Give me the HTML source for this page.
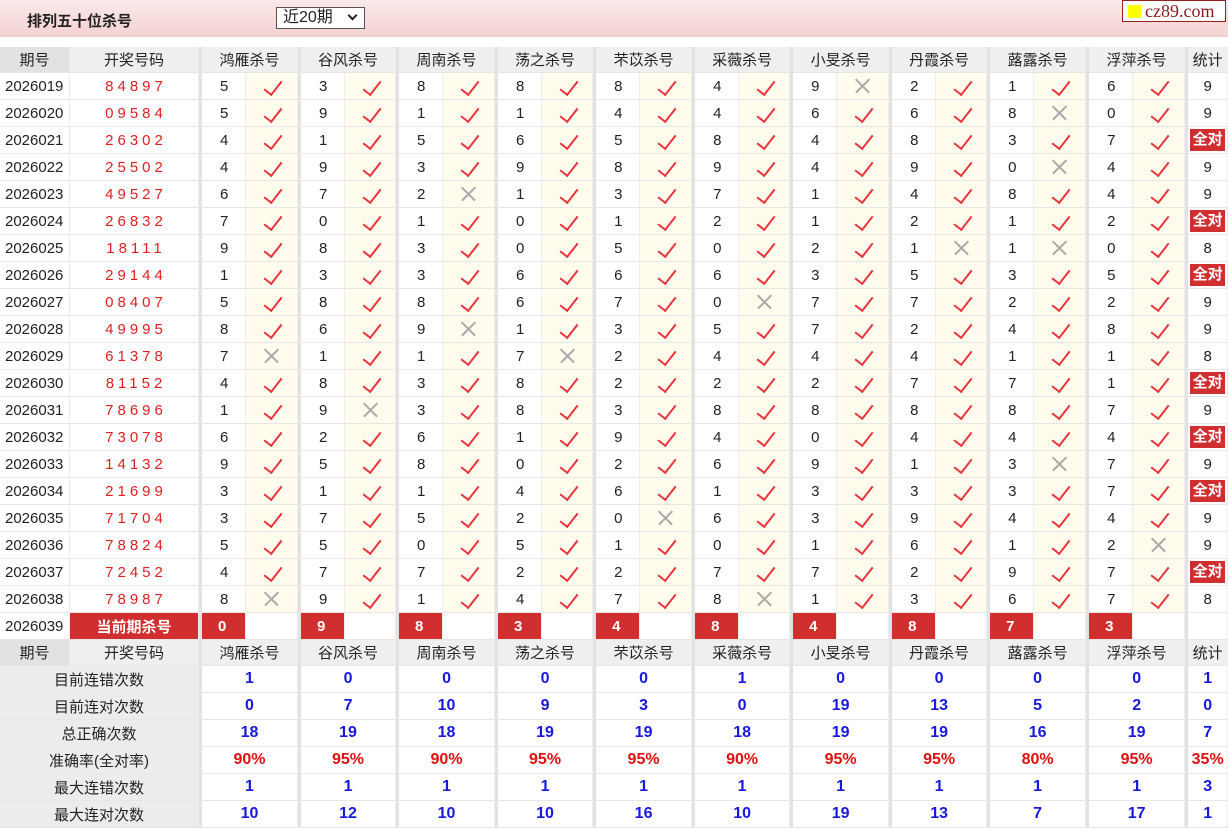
<!DOCTYPE html>
<html><head><meta charset="utf-8"><style>
*{box-sizing:border-box;margin:0;padding:0}
body{width:1228px;height:830px;overflow:hidden;background:#fff;font-family:"Liberation Sans","Noto Sans CJK SC",sans-serif;color:#222;position:relative}
.top{position:absolute;left:0;top:0;width:1228px;height:37px;background:linear-gradient(#fbe9e9,#f4d2d2);border-bottom:1px solid #ead0d0}
.title{position:absolute;left:27px;top:10px;font-size:15px;font-weight:bold;color:#222}
.sel{position:absolute;left:276px;top:7px;width:89px;height:22px;border:1px solid #555;background:#fff;font-size:16px;padding-left:6px;line-height:20px}
.sel i{position:absolute;right:8px;top:4px;width:7px;height:7px;border-right:2px solid #222;border-bottom:2px solid #222;transform:rotate(45deg)}
.logo{position:absolute;left:1122px;top:0;width:104px;height:22px;border:1px solid #9b1c1c;background:#fff;font-family:"Liberation Serif",serif;font-size:18px;color:#8b1a1a;line-height:20px;padding-left:22px}
.logo b{position:absolute;left:5px;top:4px;width:13px;height:13px;background:#ff0}
table{position:absolute;left:0;top:47px;border-collapse:separate;border-spacing:0;table-layout:fixed;width:1228px}
td{height:27px;border-bottom:1px solid #e6e6e6;border-right:1px solid #eee;text-align:center;font-size:15px;padding:0;white-space:nowrap;position:relative}
tr.h td{height:26px;background:#efefef;color:#222}
td.p{text-align:left;padding-left:5px;background:#fff}
tr.h td.p{background:#e2e2e2;text-align:center;padding:0}
td.d{color:#e02020;letter-spacing:4px;font-size:15px;padding-left:4px}
td.g{border-left:3px solid #e2e2e2;text-align:left;padding-left:18px}
tr.h td.g{text-align:center;padding-left:0}
td.y,td.x{background:#fffcee}
td.y::after{content:"";position:absolute;left:22px;top:4px;width:8px;height:16px;border-right:2px solid #e8333b;border-bottom:2px solid #e8333b;transform:rotate(38deg)}
td.x::before,td.x::after{content:"";position:absolute;left:16px;top:12px;width:19px;height:1.5px;background:#aaa;transform:rotate(45deg)}
td.x::after{transform:rotate(-45deg)}
td.s{border-left:3px solid #e2e2e2}
td.q{padding:2px}
td.q span{display:block;background:#d12f2f;color:#fff;font-weight:bold;height:22px;line-height:22px;font-size:15px}
tr.k td.r{background:#d12f2f;color:#fff;font-weight:bold;text-align:left;padding-left:16px}
tr.k td.c{background:#d12f2f;color:#fff;font-weight:bold;letter-spacing:0}
tr.k td.w{background:#fff}
td.L{background:#ececec}
td.v{color:#1818e0;font-weight:bold;font-size:16px;border-left:3px solid #e2e2e2}
tr.a td.v{color:#e01010}
</style></head><body>
<div class="top"><div class="title">排列五十位杀号</div><div class="sel">近20期<i></i></div><div class="logo"><b></b>cz89.com</div></div>
<table>
<colgroup><col style="width:70px"><col style="width:129px"><col style="width:47px"><col style="width:52px"><col style="width:47px"><col style="width:51px"><col style="width:47px"><col style="width:52px"><col style="width:47px"><col style="width:51px"><col style="width:47px"><col style="width:52px"><col style="width:47px"><col style="width:51px"><col style="width:47px"><col style="width:52px"><col style="width:47px"><col style="width:51px"><col style="width:47px"><col style="width:52px"><col style="width:47px"><col style="width:52px"><col style="width:43px"></colgroup>
<tr class="h"><td class="p">期号</td><td>开奖号码</td><td class="g" colspan="2">鸿雁杀号</td><td class="g" colspan="2">谷风杀号</td><td class="g" colspan="2">周南杀号</td><td class="g" colspan="2">荡之杀号</td><td class="g" colspan="2">芣苡杀号</td><td class="g" colspan="2">采薇杀号</td><td class="g" colspan="2">小旻杀号</td><td class="g" colspan="2">丹霞杀号</td><td class="g" colspan="2">蕗露杀号</td><td class="g" colspan="2">浮萍杀号</td><td class="s">统计</td></tr>
<tr><td class="p">2026019</td><td class="d">84897</td><td class="g">5</td><td class="y"></td><td class="g">3</td><td class="y"></td><td class="g">8</td><td class="y"></td><td class="g">8</td><td class="y"></td><td class="g">8</td><td class="y"></td><td class="g">4</td><td class="y"></td><td class="g">9</td><td class="x"></td><td class="g">2</td><td class="y"></td><td class="g">1</td><td class="y"></td><td class="g">6</td><td class="y"></td><td class="s">9</td></tr>
<tr><td class="p">2026020</td><td class="d">09584</td><td class="g">5</td><td class="y"></td><td class="g">9</td><td class="y"></td><td class="g">1</td><td class="y"></td><td class="g">1</td><td class="y"></td><td class="g">4</td><td class="y"></td><td class="g">4</td><td class="y"></td><td class="g">6</td><td class="y"></td><td class="g">6</td><td class="y"></td><td class="g">8</td><td class="x"></td><td class="g">0</td><td class="y"></td><td class="s">9</td></tr>
<tr><td class="p">2026021</td><td class="d">26302</td><td class="g">4</td><td class="y"></td><td class="g">1</td><td class="y"></td><td class="g">5</td><td class="y"></td><td class="g">6</td><td class="y"></td><td class="g">5</td><td class="y"></td><td class="g">8</td><td class="y"></td><td class="g">4</td><td class="y"></td><td class="g">8</td><td class="y"></td><td class="g">3</td><td class="y"></td><td class="g">7</td><td class="y"></td><td class="s q"><span>全对</span></td></tr>
<tr><td class="p">2026022</td><td class="d">25502</td><td class="g">4</td><td class="y"></td><td class="g">9</td><td class="y"></td><td class="g">3</td><td class="y"></td><td class="g">9</td><td class="y"></td><td class="g">8</td><td class="y"></td><td class="g">9</td><td class="y"></td><td class="g">4</td><td class="y"></td><td class="g">9</td><td class="y"></td><td class="g">0</td><td class="x"></td><td class="g">4</td><td class="y"></td><td class="s">9</td></tr>
<tr><td class="p">2026023</td><td class="d">49527</td><td class="g">6</td><td class="y"></td><td class="g">7</td><td class="y"></td><td class="g">2</td><td class="x"></td><td class="g">1</td><td class="y"></td><td class="g">3</td><td class="y"></td><td class="g">7</td><td class="y"></td><td class="g">1</td><td class="y"></td><td class="g">4</td><td class="y"></td><td class="g">8</td><td class="y"></td><td class="g">4</td><td class="y"></td><td class="s">9</td></tr>
<tr><td class="p">2026024</td><td class="d">26832</td><td class="g">7</td><td class="y"></td><td class="g">0</td><td class="y"></td><td class="g">1</td><td class="y"></td><td class="g">0</td><td class="y"></td><td class="g">1</td><td class="y"></td><td class="g">2</td><td class="y"></td><td class="g">1</td><td class="y"></td><td class="g">2</td><td class="y"></td><td class="g">1</td><td class="y"></td><td class="g">2</td><td class="y"></td><td class="s q"><span>全对</span></td></tr>
<tr><td class="p">2026025</td><td class="d">18111</td><td class="g">9</td><td class="y"></td><td class="g">8</td><td class="y"></td><td class="g">3</td><td class="y"></td><td class="g">0</td><td class="y"></td><td class="g">5</td><td class="y"></td><td class="g">0</td><td class="y"></td><td class="g">2</td><td class="y"></td><td class="g">1</td><td class="x"></td><td class="g">1</td><td class="x"></td><td class="g">0</td><td class="y"></td><td class="s">8</td></tr>
<tr><td class="p">2026026</td><td class="d">29144</td><td class="g">1</td><td class="y"></td><td class="g">3</td><td class="y"></td><td class="g">3</td><td class="y"></td><td class="g">6</td><td class="y"></td><td class="g">6</td><td class="y"></td><td class="g">6</td><td class="y"></td><td class="g">3</td><td class="y"></td><td class="g">5</td><td class="y"></td><td class="g">3</td><td class="y"></td><td class="g">5</td><td class="y"></td><td class="s q"><span>全对</span></td></tr>
<tr><td class="p">2026027</td><td class="d">08407</td><td class="g">5</td><td class="y"></td><td class="g">8</td><td class="y"></td><td class="g">8</td><td class="y"></td><td class="g">6</td><td class="y"></td><td class="g">7</td><td class="y"></td><td class="g">0</td><td class="x"></td><td class="g">7</td><td class="y"></td><td class="g">7</td><td class="y"></td><td class="g">2</td><td class="y"></td><td class="g">2</td><td class="y"></td><td class="s">9</td></tr>
<tr><td class="p">2026028</td><td class="d">49995</td><td class="g">8</td><td class="y"></td><td class="g">6</td><td class="y"></td><td class="g">9</td><td class="x"></td><td class="g">1</td><td class="y"></td><td class="g">3</td><td class="y"></td><td class="g">5</td><td class="y"></td><td class="g">7</td><td class="y"></td><td class="g">2</td><td class="y"></td><td class="g">4</td><td class="y"></td><td class="g">8</td><td class="y"></td><td class="s">9</td></tr>
<tr><td class="p">2026029</td><td class="d">61378</td><td class="g">7</td><td class="x"></td><td class="g">1</td><td class="y"></td><td class="g">1</td><td class="y"></td><td class="g">7</td><td class="x"></td><td class="g">2</td><td class="y"></td><td class="g">4</td><td class="y"></td><td class="g">4</td><td class="y"></td><td class="g">4</td><td class="y"></td><td class="g">1</td><td class="y"></td><td class="g">1</td><td class="y"></td><td class="s">8</td></tr>
<tr><td class="p">2026030</td><td class="d">81152</td><td class="g">4</td><td class="y"></td><td class="g">8</td><td class="y"></td><td class="g">3</td><td class="y"></td><td class="g">8</td><td class="y"></td><td class="g">2</td><td class="y"></td><td class="g">2</td><td class="y"></td><td class="g">2</td><td class="y"></td><td class="g">7</td><td class="y"></td><td class="g">7</td><td class="y"></td><td class="g">1</td><td class="y"></td><td class="s q"><span>全对</span></td></tr>
<tr><td class="p">2026031</td><td class="d">78696</td><td class="g">1</td><td class="y"></td><td class="g">9</td><td class="x"></td><td class="g">3</td><td class="y"></td><td class="g">8</td><td class="y"></td><td class="g">3</td><td class="y"></td><td class="g">8</td><td class="y"></td><td class="g">8</td><td class="y"></td><td class="g">8</td><td class="y"></td><td class="g">8</td><td class="y"></td><td class="g">7</td><td class="y"></td><td class="s">9</td></tr>
<tr><td class="p">2026032</td><td class="d">73078</td><td class="g">6</td><td class="y"></td><td class="g">2</td><td class="y"></td><td class="g">6</td><td class="y"></td><td class="g">1</td><td class="y"></td><td class="g">9</td><td class="y"></td><td class="g">4</td><td class="y"></td><td class="g">0</td><td class="y"></td><td class="g">4</td><td class="y"></td><td class="g">4</td><td class="y"></td><td class="g">4</td><td class="y"></td><td class="s q"><span>全对</span></td></tr>
<tr><td class="p">2026033</td><td class="d">14132</td><td class="g">9</td><td class="y"></td><td class="g">5</td><td class="y"></td><td class="g">8</td><td class="y"></td><td class="g">0</td><td class="y"></td><td class="g">2</td><td class="y"></td><td class="g">6</td><td class="y"></td><td class="g">9</td><td class="y"></td><td class="g">1</td><td class="y"></td><td class="g">3</td><td class="x"></td><td class="g">7</td><td class="y"></td><td class="s">9</td></tr>
<tr><td class="p">2026034</td><td class="d">21699</td><td class="g">3</td><td class="y"></td><td class="g">1</td><td class="y"></td><td class="g">1</td><td class="y"></td><td class="g">4</td><td class="y"></td><td class="g">6</td><td class="y"></td><td class="g">1</td><td class="y"></td><td class="g">3</td><td class="y"></td><td class="g">3</td><td class="y"></td><td class="g">3</td><td class="y"></td><td class="g">7</td><td class="y"></td><td class="s q"><span>全对</span></td></tr>
<tr><td class="p">2026035</td><td class="d">71704</td><td class="g">3</td><td class="y"></td><td class="g">7</td><td class="y"></td><td class="g">5</td><td class="y"></td><td class="g">2</td><td class="y"></td><td class="g">0</td><td class="x"></td><td class="g">6</td><td class="y"></td><td class="g">3</td><td class="y"></td><td class="g">9</td><td class="y"></td><td class="g">4</td><td class="y"></td><td class="g">4</td><td class="y"></td><td class="s">9</td></tr>
<tr><td class="p">2026036</td><td class="d">78824</td><td class="g">5</td><td class="y"></td><td class="g">5</td><td class="y"></td><td class="g">0</td><td class="y"></td><td class="g">5</td><td class="y"></td><td class="g">1</td><td class="y"></td><td class="g">0</td><td class="y"></td><td class="g">1</td><td class="y"></td><td class="g">6</td><td class="y"></td><td class="g">1</td><td class="y"></td><td class="g">2</td><td class="x"></td><td class="s">9</td></tr>
<tr><td class="p">2026037</td><td class="d">72452</td><td class="g">4</td><td class="y"></td><td class="g">7</td><td class="y"></td><td class="g">7</td><td class="y"></td><td class="g">2</td><td class="y"></td><td class="g">2</td><td class="y"></td><td class="g">7</td><td class="y"></td><td class="g">7</td><td class="y"></td><td class="g">2</td><td class="y"></td><td class="g">9</td><td class="y"></td><td class="g">7</td><td class="y"></td><td class="s q"><span>全对</span></td></tr>
<tr><td class="p">2026038</td><td class="d">78987</td><td class="g">8</td><td class="x"></td><td class="g">9</td><td class="y"></td><td class="g">1</td><td class="y"></td><td class="g">4</td><td class="y"></td><td class="g">7</td><td class="y"></td><td class="g">8</td><td class="x"></td><td class="g">1</td><td class="y"></td><td class="g">3</td><td class="y"></td><td class="g">6</td><td class="y"></td><td class="g">7</td><td class="y"></td><td class="s">8</td></tr>
<tr class="k"><td class="p">2026039</td><td class="c">当前期杀号</td><td class="g r">0</td><td class="w"></td><td class="g r">9</td><td class="w"></td><td class="g r">8</td><td class="w"></td><td class="g r">3</td><td class="w"></td><td class="g r">4</td><td class="w"></td><td class="g r">8</td><td class="w"></td><td class="g r">4</td><td class="w"></td><td class="g r">8</td><td class="w"></td><td class="g r">7</td><td class="w"></td><td class="g r">3</td><td class="w"></td><td class="s"></td></tr>
<tr class="h"><td class="p">期号</td><td>开奖号码</td><td class="g" colspan="2">鸿雁杀号</td><td class="g" colspan="2">谷风杀号</td><td class="g" colspan="2">周南杀号</td><td class="g" colspan="2">荡之杀号</td><td class="g" colspan="2">芣苡杀号</td><td class="g" colspan="2">采薇杀号</td><td class="g" colspan="2">小旻杀号</td><td class="g" colspan="2">丹霞杀号</td><td class="g" colspan="2">蕗露杀号</td><td class="g" colspan="2">浮萍杀号</td><td class="s">统计</td></tr>
<tr><td class="L" colspan="2">目前连错次数</td><td class="v" colspan="2">1</td><td class="v" colspan="2">0</td><td class="v" colspan="2">0</td><td class="v" colspan="2">0</td><td class="v" colspan="2">0</td><td class="v" colspan="2">1</td><td class="v" colspan="2">0</td><td class="v" colspan="2">0</td><td class="v" colspan="2">0</td><td class="v" colspan="2">0</td><td class="v">1</td></tr>
<tr><td class="L" colspan="2">目前连对次数</td><td class="v" colspan="2">0</td><td class="v" colspan="2">7</td><td class="v" colspan="2">10</td><td class="v" colspan="2">9</td><td class="v" colspan="2">3</td><td class="v" colspan="2">0</td><td class="v" colspan="2">19</td><td class="v" colspan="2">13</td><td class="v" colspan="2">5</td><td class="v" colspan="2">2</td><td class="v">0</td></tr>
<tr><td class="L" colspan="2">总正确次数</td><td class="v" colspan="2">18</td><td class="v" colspan="2">19</td><td class="v" colspan="2">18</td><td class="v" colspan="2">19</td><td class="v" colspan="2">19</td><td class="v" colspan="2">18</td><td class="v" colspan="2">19</td><td class="v" colspan="2">19</td><td class="v" colspan="2">16</td><td class="v" colspan="2">19</td><td class="v">7</td></tr>
<tr class="a"><td class="L" colspan="2">准确率(全对率)</td><td class="v" colspan="2">90%</td><td class="v" colspan="2">95%</td><td class="v" colspan="2">90%</td><td class="v" colspan="2">95%</td><td class="v" colspan="2">95%</td><td class="v" colspan="2">90%</td><td class="v" colspan="2">95%</td><td class="v" colspan="2">95%</td><td class="v" colspan="2">80%</td><td class="v" colspan="2">95%</td><td class="v">35%</td></tr>
<tr><td class="L" colspan="2">最大连错次数</td><td class="v" colspan="2">1</td><td class="v" colspan="2">1</td><td class="v" colspan="2">1</td><td class="v" colspan="2">1</td><td class="v" colspan="2">1</td><td class="v" colspan="2">1</td><td class="v" colspan="2">1</td><td class="v" colspan="2">1</td><td class="v" colspan="2">1</td><td class="v" colspan="2">1</td><td class="v">3</td></tr>
<tr><td class="L" colspan="2">最大连对次数</td><td class="v" colspan="2">10</td><td class="v" colspan="2">12</td><td class="v" colspan="2">10</td><td class="v" colspan="2">10</td><td class="v" colspan="2">16</td><td class="v" colspan="2">10</td><td class="v" colspan="2">19</td><td class="v" colspan="2">13</td><td class="v" colspan="2">7</td><td class="v" colspan="2">17</td><td class="v">1</td></tr>
</table>
</body></html>
